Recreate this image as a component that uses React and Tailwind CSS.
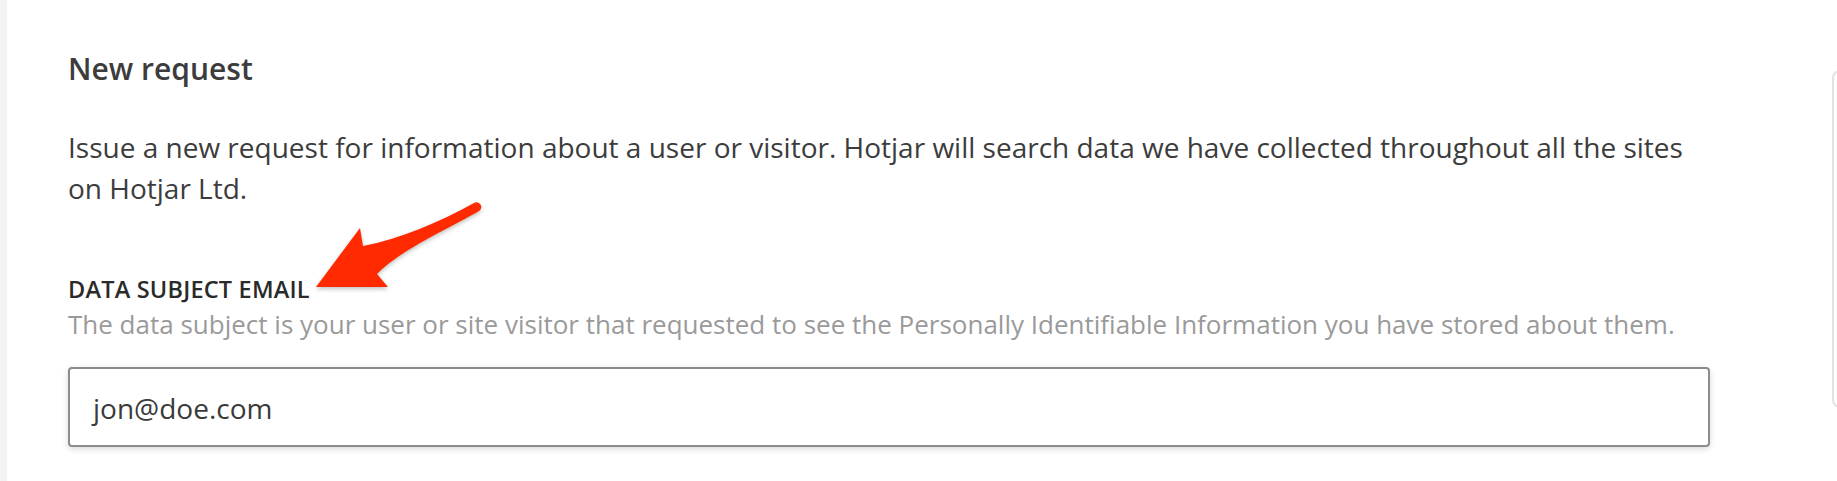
import React from "react";

function PointerArrow() {
  return (
    <svg
      className="absolute left-[300px] top-[195px] drop-shadow-[0_2px_2px_rgba(0,0,0,0.25)]"
      width="200"
      height="110"
      viewBox="0 0 200 110"
    >
      <path
        d="M16 92 L60 33 L63 51 C100 44 140 27 174 8 A4.5 4.5 0 0 1 179 16 C150 33 100 55 77 79 L88 92 Z"
        fill="#ff2a00"
      />
    </svg>
  );
}

export default function App() {
  return (
    <div className="relative flex w-[1837px] h-[481px] overflow-hidden bg-white font-['Open_Sans',sans-serif]">
      <div className="w-[7px] shrink-0 bg-[#f3f3f3]" />

      <div className="w-[1703px] shrink-0 pl-[61px] pt-[49px]">
        <h2 className="text-[30px] leading-[40px] font-semibold text-[#3c3c3c]">New request</h2>

        <p className="mt-[38px] w-[1640px] text-[28px] leading-[41px] text-[#3c3c3c]">
          Issue a new request for information about a user or visitor. Hotjar will search data we have collected throughout all the sites
          <br />
          on Hotjar Ltd.
        </p>

        <div className="mt-[64px] text-[23.5px] leading-[32px] font-semibold tracking-[0.2px] text-[#2a2a2a]">
          DATA SUBJECT EMAIL
        </div>
        <div className="mt-[1px] whitespace-nowrap text-[26px] leading-[36px] text-[#9a9a9a]">
          The data subject is your user or site visitor that requested to see the Personally Identifiable Information you have stored about them.
        </div>

        <div className="mt-[25px] flex items-center h-[80px] w-[1642px] rounded-[4px] border-2 border-[#8c8c8c] bg-white pl-[23px] pt-[2px] shadow-[0_2px_6px_rgba(0,0,0,0.15)]">
          <span className="text-[28px] text-[#3a3a3a]">jon@doe.com</span>
        </div>
      </div>

      <div className="ml-[122px] mt-[70px] h-[338px] w-[40px] shrink-0 rounded-l-[8px] border-2 border-[#e3e3e3]" />

      <PointerArrow />
    </div>
  );
}
